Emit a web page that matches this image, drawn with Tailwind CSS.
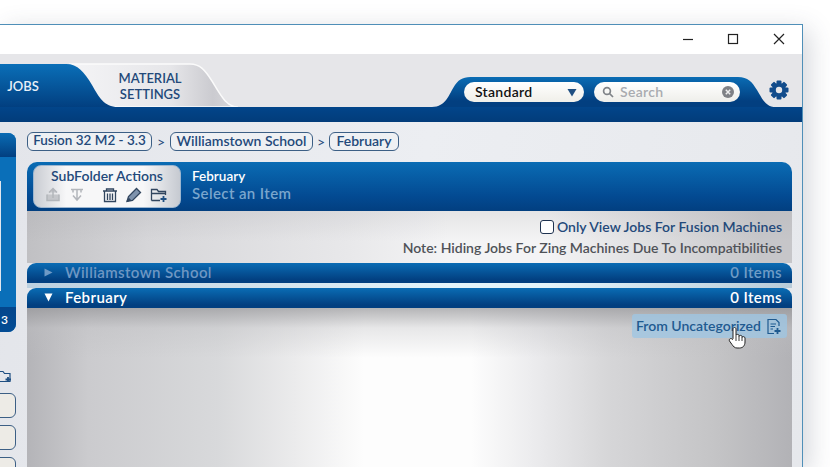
<!DOCTYPE html>
<html lang="en">
<head>
<meta charset="UTF-8">
<title>Jobs</title>
<script src="https://cdn.jsdelivr.net/npm/@tailwindcss/browser@4"></script>
</head>
<body class="w-[830px] h-[467px] overflow-hidden bg-white font-['Lato','Open_Sans',sans-serif]">
<div class="relative w-[803px] h-[443px] mt-[24px] flex flex-col border-t border-r border-[#4f8fb8] shadow-[6px_6px_24px_rgba(60,70,90,0.22)] bg-white overflow-hidden">

  <!-- title bar -->
  <div class="h-[29px] shrink-0 bg-white flex justify-end items-center">
    <svg class="w-[120px] h-[29px]" viewBox="0 0 120 29" fill="none" stroke="#222" stroke-width="1.2">
      <path d="M1 14.500h10"/>
      <rect x="46.500" y="9.500" width="9" height="9"/>
      <path d="M92 9l10 10M102 9l-10 10"/>
    </svg>
  </div>

  <!-- tab strip -->
  <div class="relative h-[53px] shrink-0 bg-[#e6e6e9] flex">
    <svg class="absolute inset-0" width="802" height="53" viewBox="0 0 802 53">
      <defs>
        <linearGradient id="tabBlue" x1="0" y1="0" x2="0" y2="1"><stop offset="0" stop-color="#0a6fb8"/><stop offset="1" stop-color="#023f80"/></linearGradient>
        <linearGradient id="tabGray" x1="0" y1="0" x2="1" y2="0"><stop offset="0" stop-color="#f4f4f6"/><stop offset=".6" stop-color="#e6e6e9"/><stop offset=".85" stop-color="#cbcbd0"/><stop offset="1" stop-color="#d8d8dc"/></linearGradient>
        <linearGradient id="rightBlue" x1="0" y1="0" x2="0" y2="1"><stop offset="0" stop-color="#0a6cb4"/><stop offset=".8" stop-color="#023f80"/></linearGradient>
      </defs>
      <path d="M70 10H190C200 10 205 16 212 27C220 40 226 53 238 53H100Z" fill="url(#tabGray)" stroke="#fbfbfb" stroke-width="1.500"/>
      <path d="M0 10H66C78 10 84 18 92 31C99 43 104 53 118 53H0Z" fill="url(#tabBlue)"/>
      <path d="M432 53C446 53 449 40 455 31C460 24 464 23 474 23H738C748 23 752 28 757 36C762 44 765 53 776 53Z" fill="url(#rightBlue)"/>
    </svg>
    <div class="relative shrink-0 w-[46px] h-[53px] pt-[12px] flex items-center justify-center text-[#e8f0f8] text-[13px] font-semibold">JOBS</div>
    <div class="relative shrink-0 w-[142px] ml-[33px] pt-[16px] text-center text-[#23497a] text-[13px] leading-[16px] font-semibold">MATERIAL<br>SETTINGS</div>
    <div class="relative shrink-0 ml-[243px] mt-[28px] w-[120px] h-[20px] rounded-full bg-[linear-gradient(#fff,#f0efe9)] flex items-center pl-[11px] pr-[7px] pb-[2px] justify-between text-[#111] text-[14px] font-semibold tracking-[0.3px]">
      Standard
      <svg class="mt-[2px]" width="10" height="9" viewBox="0 0 10 9"><path d="M0.500 1h9L5 8.500z" fill="#1f4f82"/></svg>
    </div>
    <div class="relative shrink-0 ml-[10px] mt-[28px] w-[146px] h-[20px] rounded-full bg-[linear-gradient(#fff,#eeeeea)] flex items-center pl-[8px] pr-[6px] text-[#a9abb0] text-[14px] font-semibold tracking-[0.3px]">
      <svg width="12" height="12" viewBox="0 0 12 12" fill="none" stroke="#7f8388" stroke-width="1.700"><circle cx="5" cy="5" r="3.400"/><path d="M7.500 7.500L11 11"/></svg>
      <span class="ml-[6px] flex-1 mb-[2px]">Search</span>
      <svg width="12" height="12" viewBox="0 0 12 12"><circle cx="6" cy="6" r="6" fill="#7f8186"/><path d="M3.800 3.800l4.400 4.400M8.200 3.800L3.800 8.200" stroke="#eee" stroke-width="1.500"/></svg>
    </div>
    <svg class="relative shrink-0 ml-[29px] mt-[26px]" width="20" height="20" viewBox="0 0 20 20">
      <g fill="#124c8c">
        <rect x="7.500" y="0.500" width="5" height="19" rx="1"/>
        <rect x="7.500" y="0.500" width="5" height="19" rx="1" transform="rotate(45 10 10)"/>
        <rect x="7.500" y="0.500" width="5" height="19" rx="1" transform="rotate(90 10 10)"/>
        <rect x="7.500" y="0.500" width="5" height="19" rx="1" transform="rotate(135 10 10)"/>
        <circle cx="10" cy="10" r="7"/>
      </g>
      <circle cx="10" cy="10" r="3.200" fill="#e6e6e9"/>
    </svg>
  </div>

  <!-- blue bar -->
  <div class="h-[15px] shrink-0 bg-[linear-gradient(#02458a,#023c7a)]"></div>

  <!-- content -->
  <div class="flex-1 flex min-h-0 bg-[linear-gradient(100deg,#e3e5ea,#eceef2_50%,#e6e8ec)]">

    <!-- left column -->
    <div class="w-[27px] shrink-0 pt-[11px] flex flex-col">
      <div class="w-[16px] h-[199px] shrink-0 rounded-r-[8px] overflow-hidden flex flex-col bg-[#0a6fb9]">
        <div class="h-[24px] shrink-0 bg-[linear-gradient(#0a6cb4,#023f80)]"></div>
        <div class="flex-1 pt-[24px]"><div class="w-px h-[110px] bg-[#dfe6ee]"></div></div>
        <div class="h-[25px] shrink-0 pl-[1px] flex items-center text-white text-[12px] font-semibold bg-[linear-gradient(#04468c,#034c94)]">3</div>
      </div>
      <svg class="mt-[37px] shrink-0" width="12" height="14" viewBox="0 0 12 14" fill="none" stroke="#1f4f82" stroke-width="1.200"><path d="M-3 2.500h6l1.500 2H10v8H-3"/><path d="M8 8v5M5.500 10.500h5.500" stroke-width="1.800"/></svg>
      <div class="mt-[10px] shrink-0 ml-[-8px] w-[24px] h-[25px] rounded-[6px] border border-[#3c5f85] bg-[#edebe6]"></div>
      <div class="mt-[7px] shrink-0 ml-[-8px] w-[24px] h-[25px] rounded-[6px] border border-[#3c5f85] bg-[#edebe6]"></div>
      <div class="mt-[7px] shrink-0 ml-[-8px] w-[24px] h-[25px] rounded-[6px] border border-[#3c5f85] bg-[#edebe6]"></div>
    </div>

    <!-- main column -->
    <div class="w-[765px] shrink-0 pt-[10px] flex flex-col min-h-0">
      <div class="flex items-center h-[19px] text-[#23497a] text-[14px] font-semibold">
        <span class="h-[19px] w-[125px] pb-[2px] flex items-center justify-center rounded-[6px] border border-[#3c5f85] bg-[#eef0f3] text-[13.500px]">Fusion 32 M2 - 3.3</span>
        <span class="w-[18px] text-center font-normal">&gt;</span>
        <span class="h-[19px] w-[143px] pb-[2px] flex items-center justify-center rounded-[6px] border border-[#3c5f85] bg-[#eef0f3]">Williamstown School</span>
        <span class="w-[16px] text-center font-normal">&gt;</span>
        <span class="h-[19px] w-[70px] pb-[2px] flex items-center justify-center rounded-[6px] border border-[#3c5f85] bg-[#eef0f3]">February</span>
      </div>

      <!-- header -->
      <div class="mt-[11px] h-[49px] shrink-0 rounded-t-[10px] bg-[linear-gradient(#0a6cb4,#034a92_70%,#023f80)] flex pl-[6px] pt-[3px]">
        <div class="w-[148px] h-[43px] rounded-[8px] border border-[#9db6cf] bg-[linear-gradient(90deg,#c9ccd2,#f7f7f8_22%,#f7f7f8_75%,#c6cad1)] flex flex-col items-center">
          <div class="h-[20px] pb-[2px] flex items-center text-[#23497a] text-[14px] font-semibold">SubFolder Actions</div>
          <svg width="130" height="18" viewBox="0 0 130 18" fill="none">
            <g stroke="#b3b6bb" stroke-width="1.500">
              <path d="M5 8.500V14.500H17V8.500M11 12V3M7 6.500L11 2.500L15 6.500" fill="#c4c6ca"/>
              <path d="M29 3.500H41M35 3.500V14M31 9.500L35 14L39 9.500M31 3.500V6.500M39 3.500V6.500" />
            </g>
            <g stroke="#32465f" stroke-width="1.300">
              <path d="M61 5H75M64.500 5V3H71.500V5M62.500 5.500V15.500H73.500V5.500"/>
              <path d="M65.500 7.500V14M68 7.500V14M70.500 7.500V14"/>
              <path d="M85 15.500L86.500 10.500L94.500 2.500L98.500 6.500L90.500 14.500Z" fill="#7f93ad"/>
              <path d="M85 15.500L87 12.800L88 13.800Z" fill="#32465f"/>
              <path d="M109.500 14.500V3.500H115L116.500 5.500H123.500V9M109.500 14.500H118M110 7.500H123.500"/>
              <path d="M121.500 10V16M118.500 13H124.500" stroke="#1f4f82" stroke-width="1.800"/>
            </g>
          </svg>
        </div>
        <div class="ml-[11px] pt-[3px] flex flex-col">
          <span class="text-white text-[13.500px] leading-[17px] font-semibold">February</span>
          <span class="text-[#7aa6cd] text-[15px] leading-[17px] font-semibold tracking-[0.4px]">Select an Item</span>
        </div>
      </div>

      <!-- filter -->
      <div class="h-[52px] shrink-0 pr-[10px] flex flex-col items-end bg-[linear-gradient(rgba(165,165,170,0.2),rgba(255,255,255,0)_30px),linear-gradient(90deg,#c0c0c3,#d6d6d9_16%,#e8e8ea_42%,#f4f4f5_55%,#f4f4f5_68%,#dcdcde_83%,#c6c6c9_96%)]">
        <div class="h-[21px] mt-[5px] flex items-center text-[#23497a] text-[14px] font-semibold">
          <span class="w-[14px] h-[14px] mr-[3px] rounded-[3px] border border-[#1f3350] bg-white"></span>Only View Jobs For Fusion Machines
        </div>
        <div class="h-[20px] flex items-center text-[#4f5258] text-[14px] font-semibold">Note: Hiding Jobs For Zing Machines Due To Incompatibilities</div>
      </div>

      <!-- folder rows -->
      <div class="h-[20px] shrink-0 rounded-t-[9px] bg-[linear-gradient(#0a6cb4,#023f80_85%)] flex items-center pl-[17px] pr-[10px] pb-[1px] text-[#6f97c3] text-[15px] font-semibold tracking-[0.4px]">
        <svg width="9" height="9" viewBox="0 0 9 9"><path d="M0.500 0.500L8.500 4.500L0.500 8.500z" fill="#6f9ac6"/></svg>
        <span class="ml-[12px] flex-1">Williamstown School</span>
        <span class="text-[#6f9cc6]">0 Items</span>
      </div>
      <div class="h-[5px] shrink-0 bg-[linear-gradient(90deg,#bcd0e0,#d2e2ec_30%,#e4f4fb_55%,#e4f4fb_68%,#b8cbd9)]"></div>
      <div class="h-[20px] shrink-0 rounded-t-[9px] bg-[linear-gradient(#0a6cb4,#023f80_85%)] flex items-center pl-[17px] pr-[10px] pb-[1px] text-white text-[15px] font-semibold tracking-[0.4px]">
        <svg width="9" height="9" viewBox="0 0 9 9"><path d="M0.500 0.500H8.500L4.500 8.500z" fill="#fff"/></svg>
        <span class="ml-[12px] flex-1">February</span>
        <span>0 Items</span>
      </div>

      <!-- folder body -->
      <div class="relative flex-1 flex justify-end items-start pr-[5px] pt-[6px] bg-[linear-gradient(rgba(150,150,153,0.7),rgba(190,190,193,0.35)_20px,rgba(255,255,255,0)_50px),linear-gradient(90deg,#b4b4b8,#cbcbce_8%,#d8d9db_25%,#ebebec_35%,#fdfdfd_44%,#fdfdfd_58%,#ececee_66%,#d6d6d8_76%,#c4c4c6_90%,#b2b2b6)]">
        <div class="h-[24px] w-[155px] pb-[2px] rounded-[3px] bg-[#9fc6e2]/80 flex items-center justify-between pl-[4px] pr-[5px] text-[#1f5a90] text-[14px] font-semibold">
          From Uncategorized
          <svg class="mt-[2px]" width="16" height="17" viewBox="0 0 16 17" fill="none" stroke="#1f5a90" stroke-width="1.200">
            <path d="M8 15.500H2V1.500H10L13 4.500V8M4.500 6H10M4.500 8.500H9M4.500 11H7"/>
            <path d="M11.500 10V16M8.500 13H14.500" stroke-width="1.800"/>
          </svg>
        </div>
        <!-- mouse cursor -->
        <svg class="absolute left-[701px] top-[18px]" width="19" height="23" viewBox="0 0 19 23">
          <path d="M5 12.500V3C5 1 8 1 8 3V9.500C8 8 11 8 11 9.500V10.500C11 9 14 9 14 10.500V11.500C14 10.300 17 10.300 17 12V16C17 19.500 15 22 11.500 22H9C6.500 22 5.500 20.500 4 18.500L1.500 15C0.500 13 3 11.500 4.500 13.500Z" fill="#fff" stroke="#222" stroke-width="1"/>
          <path d="M8 10V15M11 10.500V15M14 11.500V15" stroke="#222" stroke-width="0.900"/>
        </svg>
      </div>
    </div>
  </div>
</div>
</body>
</html>
